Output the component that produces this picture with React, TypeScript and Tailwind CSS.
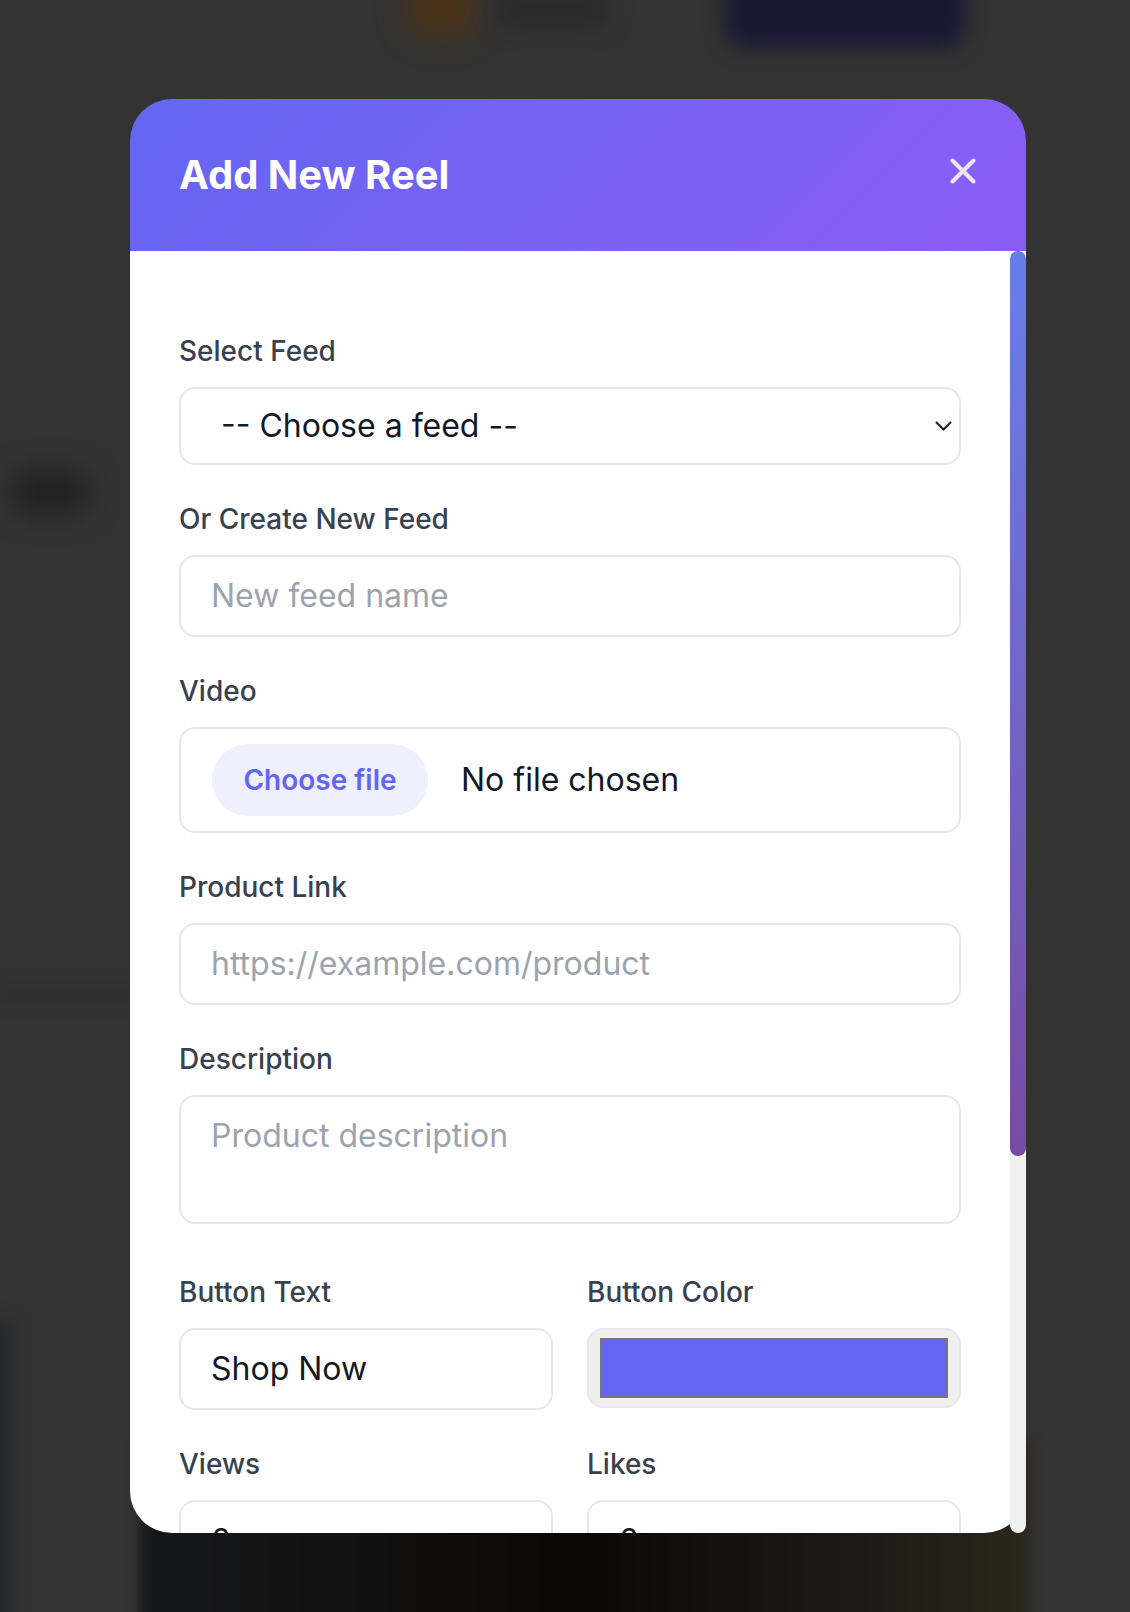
import { useState } from "react";

const labelClass = "block text-[28px] leading-[40px] font-medium text-[#374151] mb-[16px]";
const inputClass =
  "block w-full rounded-[16px] border-2 border-[#e5e7eb] bg-white px-[30px] py-[15px] text-[32px] leading-[48px] text-[#111827] placeholder:text-[#9ca3af] outline-none";

function Backdrop() {
  return (
    <>
      {/* blurred page behind the overlay */}
      <div className="absolute left-[405px] top-[-20px] w-[75px] h-[58px] rounded-full bg-[#4a3218] blur-[14px]" />
      <div className="absolute left-[495px] top-[-10px] w-[115px] h-[38px] rounded-[10px] bg-[#2b2b2b] blur-[10px]" />
      <div className="absolute left-[725px] top-[-30px] w-[240px] h-[78px] rounded-[20px] bg-[#1a1833] blur-[10px]" />
      <div className="absolute left-[10px] top-[470px] w-[80px] h-[44px] rounded-full bg-[#212121] blur-[14px]" />
      <div className="absolute left-0 top-[988px] w-[140px] h-[12px] bg-[#2c2c2c] blur-[8px]" />
      <div className="absolute left-[-14px] top-[1320px] w-[26px] h-[320px] bg-[#26282a] blur-[8px]" />
      <div className="absolute left-[140px] top-[1440px] w-[890px] h-[220px] bg-linear-to-r from-[#17181a] via-[#0b0907] to-[#2c261c] blur-[6px]" />
    </>
  );
}

export default function App() {
  const [feed, setFeed] = useState("");
  const [feedName, setFeedName] = useState("");
  const [link, setLink] = useState("");
  const [description, setDescription] = useState("");
  const [buttonText, setButtonText] = useState("Shop Now");
  const [views, setViews] = useState("0");
  const [likes, setLikes] = useState("0");

  return (
    <div className="relative min-h-[1612px] w-full overflow-hidden bg-[#333333] font-['Inter',sans-serif]">
      <Backdrop />

      <div className="relative ml-[130px] pt-[99px] w-[896px]">
        <div className="relative">
          <div className="flex h-[152px] items-center justify-between rounded-t-[42px] bg-linear-135 from-[#6366f1] to-[#8b5cf6] pl-[49px] pr-[50px]">
            <h2 className="text-[40px] leading-[56px] font-bold text-white">Add New Reel</h2>
            <button type="button" aria-label="Close" className="-mt-[8px] text-[#ece6fd]">
              <svg width="26" height="26" viewBox="0 0 26 26" fill="none" stroke="currentColor" strokeWidth="4" strokeLinecap="round">
                <line x1="2.5" y1="2.5" x2="23.5" y2="23.5" />
                <line x1="23.5" y1="2.5" x2="2.5" y2="23.5" />
              </svg>
            </button>
          </div>

          <div className="h-[1282px] overflow-hidden rounded-b-[42px] bg-white pl-[49px] pr-[65px] pt-[80px]">
            <form className="flex flex-col gap-[34px]" onSubmit={(e) => e.preventDefault()}>
              <div>
                <label className={labelClass}>Select Feed</label>
                <div className="relative">
                  <select
                    value={feed}
                    onChange={(e) => setFeed(e.target.value)}
                    className="block h-[78px] w-full appearance-none rounded-[16px] border-2 border-[#e5e7eb] bg-white pl-[40px] pr-[40px] text-[32px] text-[#111827] outline-none"
                  >
                    <option value="">-- Choose a feed --</option>
                    <option value="summer">Summer Collection</option>
                    <option value="new">New Arrivals</option>
                  </select>
                  <svg
                    className="pointer-events-none absolute right-[9px] top-1/2 -translate-y-1/2"
                    width="17"
                    height="10"
                    viewBox="0 0 17 10"
                    fill="none"
                    stroke="#1f2937"
                    strokeWidth="2.2"
                  >
                    <polyline points="1,1 8.5,8.5 16,1" />
                  </svg>
                </div>
              </div>

              <div>
                <label className={labelClass}>Or Create New Feed</label>
                <input
                  type="text"
                  value={feedName}
                  onChange={(e) => setFeedName(e.target.value)}
                  className={inputClass}
                  placeholder="New feed name"
                />
              </div>

              <div>
                <label className={labelClass}>Video</label>
                <label className="flex h-[106px] cursor-pointer items-center rounded-[16px] border-2 border-[#e5e7eb] bg-white pl-[31px]">
                  <input type="file" accept="video/*" className="hidden" />
                  <span className="flex h-[72px] w-[216px] items-center justify-center rounded-full bg-[#efeffd] text-[28px] font-semibold text-[#6366f1]">
                    Choose file
                  </span>
                  <span className="ml-[33px] text-[32px] text-[#111827]">No file chosen</span>
                </label>
              </div>

              <div>
                <label className={labelClass}>Product Link</label>
                <input
                  type="url"
                  value={link}
                  onChange={(e) => setLink(e.target.value)}
                  className={inputClass}
                  placeholder="https://example.com/product"
                />
              </div>

              <div className="mb-[14px]">
                <label className={labelClass}>Description</label>
                <textarea
                  value={description}
                  onChange={(e) => setDescription(e.target.value)}
                  className={`${inputClass} h-[129px] resize-none`}
                  placeholder="Product description"
                />
              </div>

              <div className="grid grid-cols-2 gap-x-[34px] gap-y-[34px]">
                <div>
                  <label className={labelClass}>Button Text</label>
                  <input
                    type="text"
                    value={buttonText}
                    onChange={(e) => setButtonText(e.target.value)}
                    className={inputClass}
                  />
                </div>
                <div>
                  <label className={labelClass}>Button Color</label>
                  <div className="flex h-[80px] items-center rounded-[16px] border-2 border-[#e6e7ea] bg-[#efefef] px-[11px]">
                    <div className="h-[60px] w-full border-2 border-[#767676] bg-[#6366f1]" />
                  </div>
                </div>
                <div>
                  <label className={labelClass}>Views</label>
                  <input
                    type="number"
                    value={views}
                    onChange={(e) => setViews(e.target.value)}
                    className={inputClass}
                  />
                </div>
                <div>
                  <label className={labelClass}>Likes</label>
                  <input
                    type="number"
                    value={likes}
                    onChange={(e) => setLikes(e.target.value)}
                    className={inputClass}
                  />
                </div>
              </div>
            </form>
          </div>

          {/* scrollbar of the modal body */}
          <div className="absolute right-0 top-[152px] bottom-0 w-[16px] rounded-full bg-[#f0f0f0]">
            <div className="h-[905px] rounded-full bg-linear-to-b from-[#667eea] to-[#764ba2]" />
          </div>
        </div>
      </div>
    </div>
  );
}
